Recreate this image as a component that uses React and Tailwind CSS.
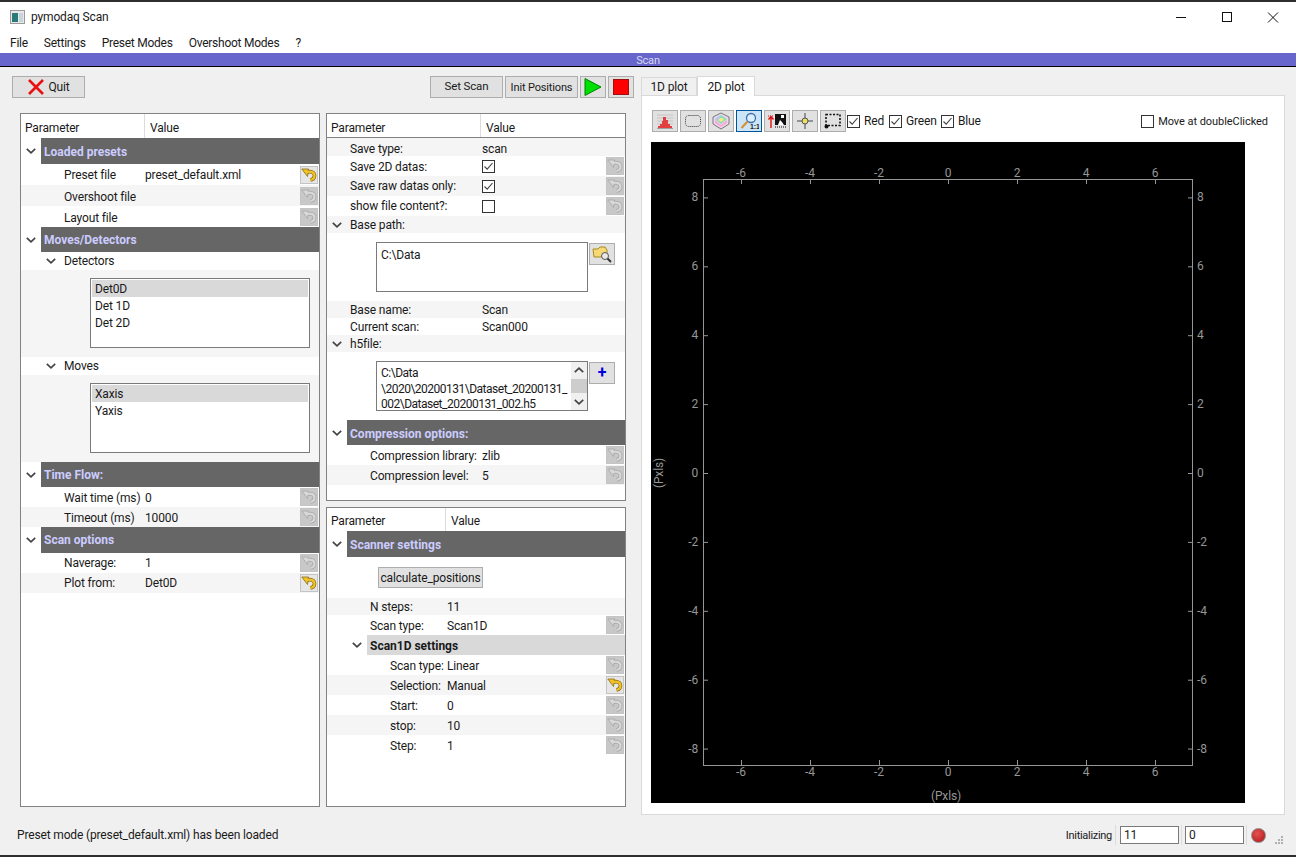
import React from 'react'

function ResetIcon({ active = false }) {
  const c = active ? '#f0c428' : '#d8d8d8'
  const d = active ? '#8a6a10' : '#a4a4a4'
  const curl = 'M5 5.5 C10 3.5 13.5 5.5 13.5 8.5 C13.5 11 12 12.5 9.5 13'
  return (
    <div className={`w-[18px] h-[18px] shrink-0 border border-[#c4c4c4] flex items-center justify-center ${active ? 'bg-[#e6e6e6]' : 'bg-[#c8c8c8]'}`}>
      <svg width="16" height="16" viewBox="0 0 16 16" fill="none">
        <path d={curl} stroke={d} strokeWidth="3.6" />
        <path d="M0.8 2 H7.5 L6.5 9.5 Z" fill={c} stroke={d} strokeWidth="0.8" />
        <path d={curl} stroke={c} strokeWidth="2.2" />
      </svg>
    </div>
  )
}

function Chevron({ className = '' }) {
  return (
    <svg width="10" height="6" viewBox="0 0 10 6" className={className} fill="none">
      <path d="M0.8 0.8 L5 4.8 L9.2 0.8" stroke="#444" strokeWidth="1.7" />
    </svg>
  )
}

function Check({ checked = false }) {
  return (
    <div className="w-[13px] h-[13px] shrink-0 border border-[#333] bg-white flex items-center justify-center">
      {checked && (
        <svg width="11" height="11" viewBox="0 0 11 11" fill="none">
          <path d="M1.5 5.5 L4.2 8.2 L9.5 2" stroke="#444" strokeWidth="1.1" />
        </svg>
      )}
    </div>
  )
}

function Row({ label, value, h = 'h-[20px]', tp = 'pt-[2px]', indent, col, alt = false, reset = false, activeReset = false, children }) {
  return (
    <div className={`flex items-center ${h} ${alt ? 'bg-[#f5f5f5]' : 'bg-white'}`}>
      <div className={`shrink-0 whitespace-nowrap ${col} ${indent} ${tp}`}>{label}</div>
      <div className="flex-1 whitespace-nowrap">
        {value && <div className={tp}>{value}</div>}
        {children}
      </div>
      {(reset || activeReset) && <div className="pr-[1px]"><ResetIcon active={activeReset} /></div>}
    </div>
  )
}

function GroupBar({ label, h = 'h-[26px]', pad = 'w-[20px]', tp = 'pt-[2px]' }) {
  return (
    <div className={`flex ${h} bg-white`}>
      <div className={`${pad} flex items-center justify-center shrink-0`}><Chevron /></div>
      <div className={`flex-1 bg-[#666666] text-[#ccccff] font-bold tracking-normal flex items-center pl-[3px] ${tp}`}>{label}</div>
    </div>
  )
}

function Header({ col, h = 'h-[24px]', tp = 'pt-[4px]', line = false }) {
  return (
    <div className={`flex items-center ${h} bg-white shrink-0 ${line ? 'border-b border-[#808080]' : ''}`}>
      <div className={`${col} pl-[4px] h-full flex items-center border-r border-[#dcdcdc] ${tp}`}>Parameter</div>
      <div className={`pl-[5px] ${tp}`}>Value</div>
    </div>
  )
}

function ListBox({ items, selected }) {
  return (
    <div className="w-[220px] h-[70px] border border-[#7a7a7a] bg-white px-[1px] pt-[1px]">
      {items.map((it, i) => (
        <div key={it} className={`h-[17px] pl-[3px] flex items-center ${i === selected ? 'bg-[#d9d9d9]' : ''}`}>{it}</div>
      ))}
    </div>
  )
}

function LeftTree() {
  const col = 'w-[124px]'
  return (
    <div className="w-[300px] h-[694px] border border-[#828282] bg-white shrink-0">
      <Header col={col} />
      <GroupBar label="Loaded presets" />
      <Row label="Preset file" value="preset_default.xml" h="h-[21px]" tp="" indent="pl-[43px]" col={col} activeReset />
      <Row label="Overshoot file" h="h-[21px]" indent="pl-[43px]" col={col} alt reset />
      <Row label="Layout file" h="h-[21px]" indent="pl-[43px]" col={col} reset />
      <GroupBar label="Moves/Detectors" h="h-[25px]" tp="" />
      <div className="flex items-center h-[18px]">
        <Chevron className="ml-[25px]" />
        <span className="ml-[8px]">Detectors</span>
      </div>
      <div className="h-[87px] bg-[#f5f5f5] pt-[8px] pl-[69px]"><ListBox items={['Det0D', 'Det 1D', 'Det 2D']} selected={0} /></div>
      <div className="flex items-center h-[18px]">
        <Chevron className="ml-[25px]" />
        <span className="ml-[8px]">Moves</span>
      </div>
      <div className="h-[87px] bg-[#f5f5f5] pt-[8px] pl-[69px]"><ListBox items={['Xaxis', 'Yaxis']} selected={0} /></div>
      <GroupBar label="Time Flow:" h="h-[25px]" tp="" />
      <Row label="Wait time (ms)" value="0" indent="pl-[43px]" col={col} reset />
      <Row label="Timeout (ms)" value="10000" indent="pl-[43px]" col={col} alt reset />
      <GroupBar label="Scan options" tp="" />
      <Row label="Naverage:" value="1" tp="" indent="pl-[43px]" col={col} reset />
      <Row label="Plot from:" value="Det0D" tp="" indent="pl-[43px]" col={col} alt activeReset />
    </div>
  )
}

function SaveTree() {
  const col = 'w-[155px]'
  const ind = 'pl-[23px]'
  return (
    <div className="h-[388px] border border-[#828282] bg-white">
      <Header col="w-[154px]" line />
      <Row label="Save type:" value="scan" h="h-[18px]" tp="pt-[4px]" indent={ind} col={col} alt />
      <Row label="Save 2D datas:" indent={ind} col={col} reset><Check checked /></Row>
      <Row label="Save raw datas only:" tp="" indent={ind} col={col} alt reset><Check checked /></Row>
      <Row label="show file content?:" tp="" indent={ind} col={col} reset><Check /></Row>
      <div className="flex items-center h-[17px] bg-[#f5f5f5]">
        <Chevron className="ml-[5px]" /><span className="ml-[8px]">Base path:</span>
      </div>
      <div className="h-[68px] flex items-start pt-[9px] pl-[49px] bg-white">
        <div className="w-[212px] h-[50px] border border-[#7a7a7a] px-[4px] pt-[6px]">C:\Data</div>
        <div className="ml-[1px] mt-[1px] w-[26px] h-[22px] bg-[#e1e1e1] border border-[#adadad] flex items-center justify-center">
          <svg width="20" height="18" viewBox="0 0 20 18" fill="none">
            <path d="M1 4 H6 L8 2 H13 L15 5 V12 H2 Z" fill="#f6d874" stroke="#a88a20" />
            <circle cx="13" cy="11" r="3.5" fill="#e8e8e8" stroke="#555" />
            <path d="M15.5 13.5 L19 17" stroke="#333" strokeWidth="2" />
          </svg>
        </div>
      </div>
      <Row label="Base name:" value="Scan" h="h-[17px]" tp="" indent={ind} col={col} alt />
      <Row label="Current scan:" value="Scan000" h="h-[17px]" tp="" indent={ind} col={col} />
      <div className="flex items-center h-[17px] bg-[#f5f5f5]">
        <Chevron className="ml-[5px]" /><span className="ml-[8px]">h5file:</span>
      </div>
      <div className="h-[68px] flex items-start pt-[9px] pl-[49px] bg-white">
        <div className="w-[212px] h-[50px] border border-[#7a7a7a] flex overflow-hidden">
          <div className="flex-1 min-w-0 overflow-hidden pl-[4px] leading-[15.5px] pt-[4px] whitespace-nowrap tracking-[-0.5px]">
            <div>C:\Data</div>
            <div>\2020\20200131\Dataset_20200131_</div>
            <div>002\Dataset_20200131_002.h5</div>
          </div>
          <div className="w-[16px] shrink-0 bg-[#f0f0f0] flex flex-col items-center justify-between py-[5px]">
            <Chevron className="rotate-180" />
            <div className="w-[16px] h-[14px] bg-[#cdcdcd]" />
            <Chevron />
          </div>
        </div>
        <div className="ml-[1px] mt-[1px] w-[26px] h-[22px] bg-[#e1e1e1] border border-[#adadad] flex items-center justify-center text-[#0000dd] font-bold text-[16px] leading-none">+</div>
      </div>
      <GroupBar label="Compression options:" h="h-[25px]" />
      <Row label="Compression library:" value="zlib" indent="pl-[43px]" col={col} reset />
      <Row label="Compression level:" value="5" indent="pl-[43px]" col={col} alt reset />
    </div>
  )
}

function ScanTree() {
  const col = 'w-[120px]'
  return (
    <div className="h-[300px] border border-[#828282] bg-white">
      <Header col="w-[119px]" h="h-[23px]" tp="pt-[2px]" />
      <GroupBar label="Scanner settings" />
      <div className="h-[41px] flex items-center pl-[51px]">
        <div className="w-[105px] h-[21px] bg-[#e1e1e1] border border-[#adadad] flex items-center justify-center">calculate_positions</div>
      </div>
      <Row label="N steps:" value="11" h="h-[17px]" tp="" indent="pl-[43px]" col={col} alt />
      <Row label="Scan type:" value="Scan1D" indent="pl-[43px]" col={col} reset />
      <div className="flex h-[20px]">
        <div className="w-[40px] shrink-0 flex items-center justify-end pr-[5px]"><Chevron /></div>
        <div className="flex-1 bg-[#d9d9d9] font-bold tracking-normal flex items-center pl-[3px] pt-[2px]">Scan1D settings</div>
      </div>
      <Row label="Scan type:" value="Linear" indent="pl-[63px]" col={col} reset />
      <Row label="Selection:" value="Manual" indent="pl-[63px]" col={col} alt activeReset />
      <Row label="Start:" value="0" indent="pl-[63px]" col={col} reset />
      <Row label="stop:" value="10" indent="pl-[63px]" col={col} alt reset />
      <Row label="Step:" value="1" indent="pl-[63px]" col={col} reset />
    </div>
  )
}

function ToolButton({ active = false, children }) {
  return (
    <div className={`w-[26px] h-[22px] shrink-0 flex items-center justify-center border ${active ? 'bg-[#cce4f7] border-[#005499]' : 'bg-[#e1e1e1] border-[#adadad]'}`}>
      <svg width="20" height="18" viewBox="0 0 20 18" fill="none">{children}</svg>
    </div>
  )
}

function PlotToolbar() {
  return (
    <div className="flex items-center h-[22px] ml-[10px] mt-[14px] mr-[16px]">
      <div className="flex gap-[2px]">
        <ToolButton>
          <path d="M2 3 H18 M2 6 H18 M2 9 H18 M2 12 H18" stroke="#c4c4c4" />
          <path d="M3 16 V14 H5 V12 H7 V9 H8 V5 H11 V8 H13 V12 H15 V14 H17 V16 Z" fill="#e24040" />
          <path d="M2 16.5 H18" stroke="#a0a0a0" />
        </ToolButton>
        <ToolButton>
          <rect x="2.5" y="3.5" width="15" height="11" rx="3" stroke="#333" strokeDasharray="1 1" />
        </ToolButton>
        <ToolButton>
          <path d="M10 1 L18 5 V12 L10 17 L2 12 V5 Z" fill="#f0d8ec" stroke="#777" />
          <path d="M10 3 L16 7 L10 12 L4 7 Z" fill="#86dcc0" />
          <path d="M4 8 L10 13 L16 8 V11 L10 15 L4 11 Z" fill="#f6a8d4" />
          <path d="M8 6 L12 6 L13 8 L10 10 L7 8 Z" fill="#f8ea78" />
          <path d="M4 7 L8 4 L9 6 L6 9 Z" fill="#b0c4f8" />
        </ToolButton>
        <ToolButton active>
          <circle cx="12" cy="6" r="4.5" fill="#dceefc" stroke="#3a70b0" strokeWidth="1.3" />
          <path d="M8.5 9.5 L2.5 16" stroke="#d89030" strokeWidth="2.2" />
          <text x="11" y="17" fontSize="7" fontWeight="700" fill="#222" fontFamily="Liberation Sans, sans-serif">1:1</text>
        </ToolButton>
        <ToolButton>
          <path d="M8 2 H19 V13 H8 Z" fill="#111" />
          <path d="M11 13 L13 8 L15 10 L17 13 Z M14 3 H17 V6 H14 Z" fill="#fff" />
          <path d="M4 16 V5 M1.5 7.5 L4 4.5 L6.5 7.5" stroke="#e01010" strokeWidth="1.4" />
          <path d="M1 4 H7" stroke="#e01010" strokeDasharray="1 1" />
          <path d="M8 15 H19" stroke="#777" strokeDasharray="1 1" strokeWidth="2" />
        </ToolButton>
        <ToolButton>
          <path d="M10 1 V17 M2 9 H18" stroke="#444" />
          <circle cx="10" cy="9" r="3" fill="#e8e060" stroke="#555" />
        </ToolButton>
        <ToolButton>
          <rect x="3" y="2.5" width="14" height="11" stroke="#111" strokeWidth="1.6" strokeDasharray="2 1.5" />
          <circle cx="3.5" cy="14.5" r="2" fill="#111" />
        </ToolButton>
      </div>
      <div className="ml-[1px] w-[42px] flex items-center"><Check checked /><span className="ml-[4px]">Red</span></div>
      <div className="w-[52px] flex items-center"><Check checked /><span className="ml-[4px]">Green</span></div>
      <div className="flex items-center"><Check checked /><span className="ml-[4px]">Blue</span></div>
      <div className="ml-auto flex items-center"><Check /><span className="ml-[4px] text-[11px] tracking-[-0.05px]">Move at doubleClicked</span></div>
    </div>
  )
}

function Plot() {
  const xs = [-6, -4, -2, 0, 2, 4, 6]
  const ys = [8, 6, 4, 2, 0, -2, -4, -6, -8]
  const px = (v) => 297 + v * 34.5
  const py = (v) => 331 - v * 34.45
  const tc = '#969696'
  return (
    <svg width="594" height="661" viewBox="0 0 594 661" className="block bg-black" fontFamily="Roboto, sans-serif" fontSize="12">
      <rect x="52.5" y="37.5" width="489" height="586" stroke={tc} fill="none" />
      {xs.map((v) => (
        <g key={v}>
          <path d={`M${px(v) + 0.5} 38 V42 M${px(v) + 0.5} 623 V618`} stroke={tc} />
          <text x={px(v)} y="35" textAnchor="middle" fill={tc}>{v}</text>
          <text x={px(v)} y="634" textAnchor="middle" fill={tc}>{v}</text>
        </g>
      ))}
      {ys.map((v) => (
        <g key={v}>
          <path d={`M53 ${py(v) + 0.5} H57 M541 ${py(v) + 0.5} H537`} stroke={tc} />
          <text x="47" y={py(v) + 4} textAnchor="end" fill={tc}>{v}</text>
          <text x="546" y={py(v) + 4} fill={tc}>{v}</text>
        </g>
      ))}
      <text x="295" y="658" textAnchor="middle" fill={tc}>(Pxls)</text>
      <text x="0" y="0" textAnchor="middle" fill={tc} transform="translate(12 331) rotate(-90)">(Pxls)</text>
    </svg>
  )
}

export default function App() {
  return (
    <div className="w-[1296px] h-[857px] overflow-hidden flex flex-col bg-white text-[12px] text-[#1a1a1a] font-['Roboto',sans-serif] leading-none tracking-[-0.15px]">
      <div className="h-[2px] bg-[#2e2e2e] shrink-0" />
      {/* title bar */}
      <div className="h-[30px] flex items-center shrink-0 pl-[10px]">
        <svg width="15" height="14" viewBox="0 0 15 14">
          <rect x="0.5" y="0.5" width="14" height="13" fill="#e8e8e8" stroke="#9a9a9a" />
          <rect x="2" y="3" width="6" height="9" fill="#2a7a78" />
          <rect x="9" y="3" width="4" height="9" fill="#c8d4dc" />
        </svg>
        <span className="ml-[6px]">pymodaq Scan</span>
        <div className="ml-auto flex items-center">
          <svg width="46" height="30" viewBox="0 0 46 30"><path d="M18 15.5 H28" stroke="#111" /></svg>
          <svg width="46" height="30" viewBox="0 0 46 30"><rect x="18.5" y="10.5" width="9" height="9" fill="none" stroke="#111" /></svg>
          <svg width="46" height="30" viewBox="0 0 46 30"><path d="M18 10.5 L28 20.5 M28 10.5 L18 20.5" stroke="#111" /></svg>
        </div>
      </div>
      {/* menu */}
      <div className="h-[21px] flex items-center gap-[16px] pl-[10px] shrink-0 tracking-[-0.25px]">
        <span>File</span><span>Settings</span><span>Preset Modes</span><span>Overshoot Modes</span><span>?</span>
      </div>
      {/* dock title */}
      <div className="h-[14px] shrink-0 bg-[#6666cc] border-b border-black flex items-center justify-center pt-[2px] text-[#d8d8f0] text-[11px]">Scan</div>

      <div className="flex-1 min-h-0 bg-[#f0f0f0] flex flex-col border-b-2 border-[#2e2e2e]">
        <div className="flex-1 min-h-0 flex pt-[9px] pl-[12px]">
          {/* left pane */}
          <div className="w-[622px] shrink-0 flex flex-col">
            <div className="flex items-center h-[22px]">
              <div className="w-[73px] h-[22px] bg-[#e1e1e1] border border-[#adadad] flex items-center justify-center gap-[3px]">
                <svg width="18" height="18" viewBox="0 0 18 18"><path d="M2 2 L16 16 M16 2 L2 16" stroke="#e81010" strokeWidth="2.6" /></svg>
                <span>Quit</span>
              </div>
              <div className="ml-auto flex gap-[2px]">
                <div className="w-[73px] h-[22px] bg-[#e1e1e1] border border-[#adadad] flex items-center justify-center text-[11.5px]">Set Scan</div>
                <div className="w-[73px] h-[22px] bg-[#e1e1e1] border border-[#adadad] flex items-center justify-center whitespace-nowrap text-[11px]">Init Positions</div>
                <div className="w-[26px] h-[22px] bg-[#e1e1e1] border border-[#adadad] flex items-center justify-center">
                  <svg width="18" height="18" viewBox="0 0 18 18"><path d="M1 0.5 L17 9 L1 17.5 Z" fill="#00e000" stroke="#008000" /></svg>
                </div>
                <div className="w-[26px] h-[22px] bg-[#e1e1e1] border border-[#adadad] flex items-center justify-center">
                  <div className="w-[16px] h-[16px] bg-[#ff0000] border border-[#a01010]" />
                </div>
              </div>
            </div>
            <div className="flex gap-[6px] mt-[15px] ml-[8px] pr-[8px]">
              <LeftTree />
              <div className="w-[300px] flex flex-col gap-[6px] shrink-0">
                <SaveTree />
                <ScanTree />
              </div>
            </div>
          </div>
          {/* tabs */}
          <div className="w-[644px] ml-[7px] shrink-0 flex flex-col">
            <div className="flex items-end h-[19px] shrink-0">
              <div className="w-[56px] h-[18px] bg-[#f0f0f0] border border-b-0 border-[#d9d9d9] flex items-center justify-center">1D plot</div>
              <div className="w-[58px] h-[20px] -mb-[1px] relative bg-white border border-b-0 border-[#d9d9d9] flex items-center justify-center">2D plot</div>
            </div>
            <div className="h-[720px] bg-white border border-[#d9d9d9] flex flex-col">
              <PlotToolbar />
              <div className="ml-[9px] mt-[10px]"><Plot /></div>
            </div>
          </div>
        </div>
        {/* status bar */}
        <div className="h-[40px] shrink-0 flex items-center pl-[17px]">
          <span>Preset mode (preset_default.xml) has been loaded</span>
          <div className="ml-auto flex items-center pr-[30px]">
            <span className="text-[11px] tracking-[-0.3px]">Initializing</span>
            <div className="w-[1px] h-[20px] bg-[#dcdcdc] ml-[3px]" />
            <div className="ml-[4px] w-[59px] h-[18px] bg-white border border-[#7a7a7a] flex items-center pl-[3px]">11</div>
            <div className="w-[1px] h-[20px] bg-[#dcdcdc] ml-[2px]" />
            <div className="ml-[3px] w-[59px] h-[18px] bg-white border border-[#7a7a7a] flex items-center pl-[3px]">0</div>
            <div className="w-[1px] h-[20px] bg-[#dcdcdc] ml-[2px]" />
            <div className="ml-[4px] w-[15px] h-[15px] rounded-full bg-[radial-gradient(circle_at_40%_35%,#e85050,#a81818)] border border-[#888]" />
          </div>
          <svg width="9" height="9" viewBox="0 0 9 9" className="-ml-[21px] mr-[12px] mt-[11px] shrink-0" fill="#b0b0b0">
            <rect x="6" y="0" width="2" height="2" />
            <rect x="3" y="3" width="2" height="2" />
            <rect x="6" y="3" width="2" height="2" />
            <rect x="0" y="6" width="2" height="2" />
            <rect x="3" y="6" width="2" height="2" />
            <rect x="6" y="6" width="2" height="2" />
          </svg>
        </div>
      </div>
    </div>
  )
}
